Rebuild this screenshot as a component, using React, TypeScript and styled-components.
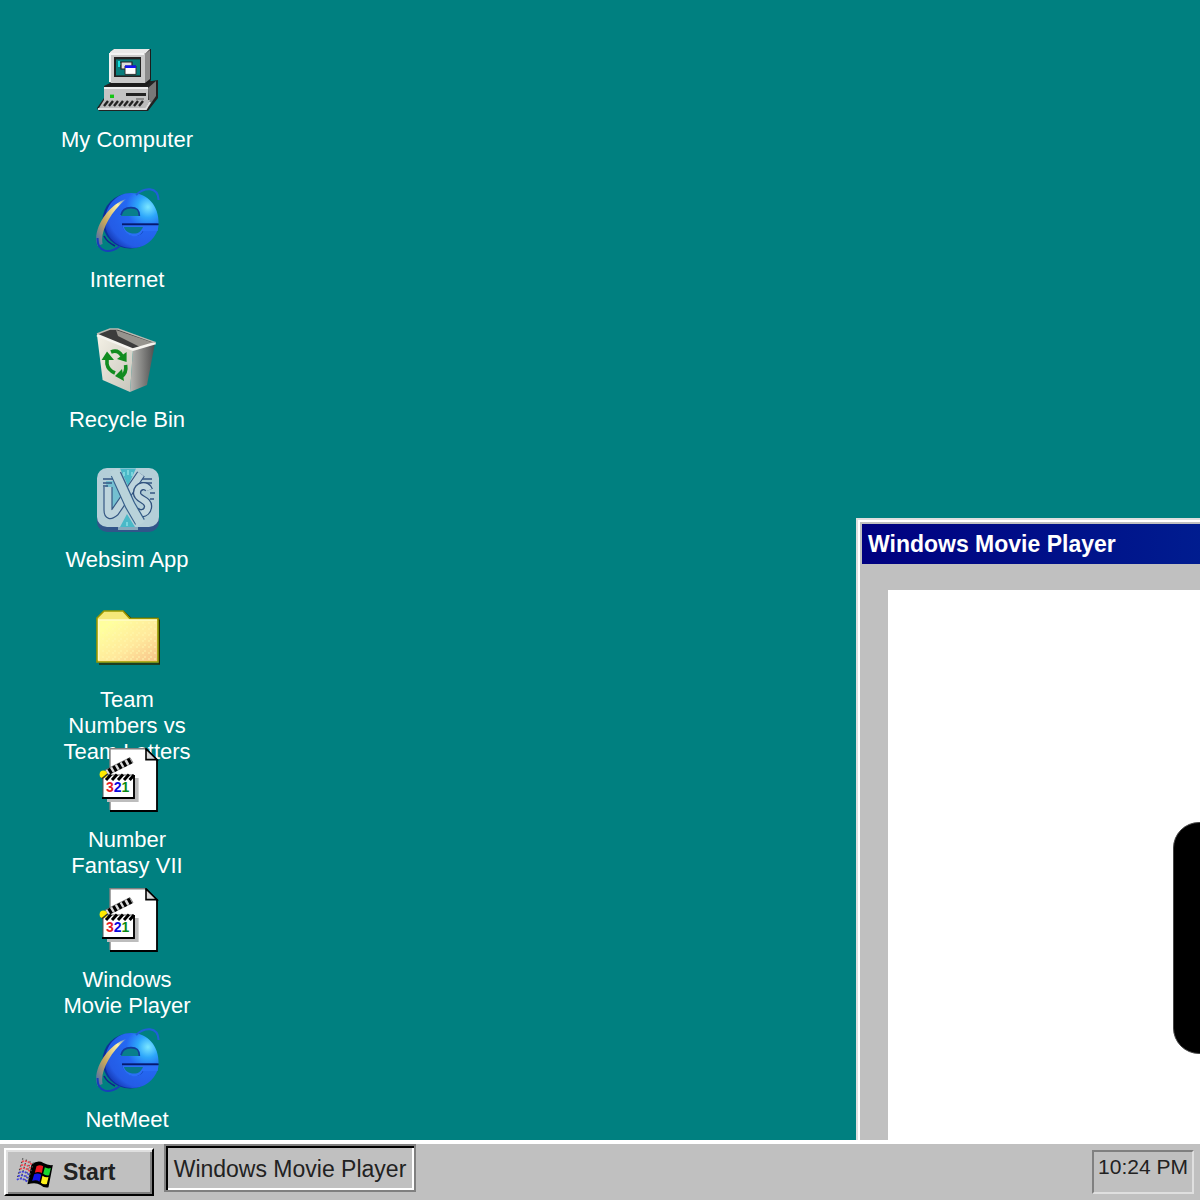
import { useState, useEffect, ReactElement } from 'react';
import styled, { createGlobalStyle } from 'styled-components';

interface DesktopItem {
    id: string;
    label: string;
    icon: () => ReactElement;
}

const GlobalStyle = createGlobalStyle`
    * {
        box-sizing: border-box;
    }

    body {
        margin: 0;
        background: #008080;
        font-family: 'Liberation Sans', Arial, sans-serif;
        font-size: 22px;
    }

    button {
        font: inherit;
        color: inherit;
        cursor: default;
    }
`;

// Styled Components
const Screen = styled.div`
    display: flex;
    flex-direction: column;
    height: 100vh;
    overflow: hidden;
`;

const Desktop = styled.main`
    position: relative;
    flex: 1;
    min-height: 0;
    overflow: hidden;
    background: #008080;
`;

const IconList = styled.ul`
    display: flex;
    flex-direction: column;
    margin: 0;
    padding: 48px 0 0 60px;
    list-style: none;
`;

const IconCell = styled.li`
    width: 136px;
    height: 140px;
`;

const IconButton = styled.button`
    display: flex;
    flex-direction: column;
    align-items: center;
    gap: 15px;
    width: 100%;
    padding: 0;
    border: none;
    background: none;
    color: white;
    line-height: 26px;
    text-align: center;
`;

const IconLabel = styled.span`
    padding-right: 2px;
`;

const IconArt = styled.svg`
    display: block;
    flex: none;
    width: 64px;
    height: 64px;
`;

const AppWindow = styled.section<{ $x: number; $y: number }>`
    position: absolute;
    left: ${props => props.$x}px;
    top: ${props => props.$y}px;
    padding: 2px;
    border: 2px solid;
    border-color: #dfdfdf #000 #000 #dfdfdf;
    background: #c0c0c0;
    box-shadow: inset 2px 2px #fff, inset -2px -2px #808080;
`;

const WindowInner = styled.div`
    padding: 2px;
`;

const TitleBar = styled.header`
    display: flex;
    align-items: center;
    height: 40px;
    padding: 0 6px;
    background: linear-gradient(90deg, #000080, #0050ac);
`;

const WindowTitle = styled.h1`
    margin: 0;
    color: white;
    font-size: 23px;
    font-weight: bold;
    line-height: 26px;
`;

const WindowBody = styled.div`
    padding: 26px;
`;

const MovieScreen = styled.div`
    display: flex;
    align-items: center;
    justify-content: center;
    width: 900px;
    height: 696px;
    background: white;
`;

const PlayButton = styled.button`
    display: flex;
    align-items: center;
    justify-content: center;
    width: 330px;
    height: 232px;
    border: 1px solid #444;
    border-radius: 26px;
    background: black;
`;

const Taskbar = styled.footer`
    display: flex;
    align-items: flex-start;
    gap: 10px;
    height: 60px;
    flex: none;
    padding: 0 6px 0 4px;
    border-top: 4px solid white;
    background: #c0c0c0;
    color: #222;
    line-height: 26px;
`;

const StartButton = styled.button`
    display: flex;
    align-items: center;
    gap: 10px;
    width: 150px;
    height: 48px;
    margin-top: 4px;
    padding: 0 10px;
    border: 2px solid;
    border-color: #fff #000 #000 #fff;
    background: #c0c0c0;
    box-shadow: inset 2px 2px #dfdfdf, inset -2px -2px #808080;
    font-size: 23px;
    font-weight: bold;
`;

const StartLogo = styled.svg`
    display: block;
    width: 37px;
    height: 31px;
`;

const TaskButton = styled.button`
    width: 252px;
    height: 48px;
    padding: 2px 6px 0;
    border: 2px solid #808080;
    background: #c0c0c0;
    box-shadow: inset 2px 2px #000, inset -2px -2px #fff;
    font-size: 23px;
    white-space: nowrap;
`;

const Tray = styled.div`
    width: 102px;
    height: 44px;
    margin: 6px 0 0 auto;
    padding: 2px 0;
    border: 2px solid;
    border-color: #808080 #dfdfdf #dfdfdf #808080;
    font-size: 21px;
    text-align: center;
    white-space: nowrap;
`;

// Icons, drawn on a 32x32 grid
const ComputerIcon = () => (
    <IconArt viewBox="0 0 32 32" aria-hidden="true">
        <path d="M4 19 9 16.500H28L31 16V25L26 31.500H1.500L.5 30 4 25Z" fill="#222" />
        <path d="M26 20 30 16.500V24L26.500 29Z" fill="#777" />
        <path d="M7 2 9 .5H27.500V16L25 19H7Z" fill="#1c1c1c" />
        <path d="M24.500 3 27 1V15.500L24.500 17.500Z" fill="#8c8c8c" />
        <path d="M7 2 9 .5H27L24.500 3H7Z" fill="#e8e8e8" />
        <path d="M6.500 2.500H24.500V17.500H7.500L6.500 16.500Z" fill="#c9c9c9" />
        <path d="M7 17V3H24" fill="none" stroke="#f2f2f2" />
        <path d="M9 4.500H22.500V14.500H9Z" fill="#222" />
        <path d="M10 5.700H22V13.700H10Z" fill="#087d7c" />
        <path d="M11 6.500h1v1h1v1h-1v1h-1z" fill="#19dede" />
        <path d="M12.500 7H18V10.500H12.500Z" fill="#ddd" stroke="#222" strokeWidth=".6" />
        <path d="M14.500 9H20V13.200H14.500Z" fill="white" stroke="#333" strokeWidth=".5" />
        <path d="M14.500 8.700H20V10H14.500Z" fill="#1414ef" />
        <path d="M4 19.500H26V26H4Z" fill="#c4c4c4" />
        <path d="M4 20H26" stroke="#eee" />
        <path d="M7 23.300H9V25H7Z" fill="#16c516" />
        <path d="M15 22.500H25V24H15Z" fill="#222" />
        <path d="M20 25.500H24" stroke="#777" strokeWidth=".7" />
        <path d="M4 26H27L25 30H1.500Z" fill="#bbb" />
        <path d="M1 30.500H25L27 27" fill="none" stroke="#dedede" />
        <path d="M4 29 6 26.500M6.500 29 8.500 26.500M9 29 11 26.500M11.500 29 13.500 26.500M14 29 16 26.500M16.500 29 18.500 26.500M19 29 21 26.500M21.500 29 23.500 26.500" stroke="#222" strokeWidth="1.200" />
    </IconArt>
);

const ExplorerIcon = () => (
    <IconArt viewBox="0 0 32 32" aria-hidden="true">
        <defs>
            <radialGradient id="globe" gradientUnits="userSpaceOnUse" cx="26" cy="9.500" r="26">
                <stop offset="0" stopColor="#7be6ff" />
                <stop offset=".2" stopColor="#2ea8fb" />
                <stop offset=".42" stopColor="#2468f2" />
                <stop offset=".8" stopColor="#245ce6" />
                <stop offset="1" stopColor="#1030a8" />
            </radialGradient>
            <linearGradient id="ring" x1="1" y1="0" x2="0" y2="1">
                <stop offset="0" stopColor="#3a78e0" />
                <stop offset=".2" stopColor="#fff0a1" />
                <stop offset=".6" stopColor="#c6a55a" />
                <stop offset="1" stopColor="#4168b4" />
            </linearGradient>
        </defs>
        <circle cx="17" cy="16.500" r="13.800" fill="#0c2f9c" />
        <path d="M17.500 2.500C26 2.500 31.500 9 31.300 17.700H13C13 21 16 24 19.500 24 22 24 23.500 22.500 24 20.500H31C29 26.500 24 30 18 30 10 30 4.500 24 4.500 17 4.500 9 10 2.500 17.500 2.500Z" fill="url(#globe)" />
        <path d="M12.500 14C13 11 15 9.800 17.500 9.800S22 11.500 21.700 14Z" fill="#087f8c" />
        <path d="M12.500 13.500C13 11 15 9.800 17.500 9.800 20.500 9.800 21.700 11 21.700 14" fill="none" stroke="#123b9c" strokeWidth=".8" />
        <path d="M13 18.500H31.300L30.800 21.500H23.500C22 24 20 24.500 18 24 15 23 13.500 21 13 18.500Z" fill="#2a6ff7" />
        <path d="M14 19.500H23.500C22.500 22 20.500 23.200 18 22.700 15.500 22.200 14.300 21 14 19.500Z" fill="#07778c" />
        <path d="M13 18.200H31.300" stroke="#06196e" strokeWidth=".9" />
        <path d="M20 3.500C24-.5 31-1 31.300 6" fill="none" stroke="#1f60d8" strokeWidth="1" />
        <path d="M15 5.500C6.500 8-2.500 21 .8 29L3.300 28C2 22 6.500 13 15 5.500Z" fill="url(#ring)" />
        <path d="M.8 25C.5 32.500 7 33 12 29" fill="none" stroke="#173fba" strokeWidth="1" />
        <path d="M4 24C5 26 7.500 28 9.500 29" stroke="#10218c" strokeWidth=".8" fill="none" />
    </IconArt>
);

const RecycleIcon = () => (
    <IconArt viewBox="0 0 32 32" aria-hidden="true">
        <defs>
            <linearGradient id="binFront" x1="0" y1="0" x2="1" y2="1">
                <stop offset="0" stopColor="#f4f1e6" />
                <stop offset="1" stopColor="#c8c6bc" />
            </linearGradient>
            <linearGradient id="binSide">
                <stop offset="0" stopColor="#b8b8b4" />
                <stop offset="1" stopColor="#4d4d4d" />
            </linearGradient>
        </defs>
        <path d="M.5 3 7 .5H11L29.800 7.500 18.500 11.500Z" fill="#3c3c3c" />
        <path d="M10 1 29 7.500 22 9.500 11 4Z" fill="#96948e" />
        <path d="M18.500 10.500 29.500 7.500 25.500 28.500 17 32Z" fill="url(#binSide)" />
        <path d="M.5 3.500 18.500 10.500 17 32 3.300 26Z" fill="url(#binFront)" />
        <path d="M.5 3.500 18.500 10.800 29.800 7.500" fill="none" stroke="#f5f4ef" strokeWidth="1.300" />
        <path d="M.5 3 7 .5H11L29.800 7.300" fill="none" stroke="#bcbab2" strokeWidth=".7" />
        <path d="M5.500 15V18Q6 21 9.500 22.500M7.500 12Q11 10.500 13 14M14.800 18.500Q15.500 22.500 12.500 24.500" fill="none" stroke="#118c20" strokeWidth="1.800" />
        <path d="M2.800 16 5.500 11.800 9 16ZM10.500 15.500 15.300 12 15.300 17ZM13 20.500 9.500 24 14 26.500Z" fill="#118c20" />
    </IconArt>
);

const WebsimIcon = () => (
    <IconArt viewBox="0 0 32 32" aria-hidden="true">
        <rect x=".5" y="1" width="31" height="31" rx="5" fill="#31558a" />
        <path d="M11 26H21V31H11Z" fill="#86a9bd" />
        <rect x=".5" y="0" width="31" height="29.500" rx="5" fill="#b4cfd8" />
        <path d="M12 .3H20L16 9ZM12 29.500 15.500 23 19.500 29.500Z" fill="#4ab9c8" />
        <path d="M5 6.500H10L14.500 17 9.500 23 5.500 20Z" fill="#74bfd0" />
        <path d="M3.500 5.500H9.500M3.500 7.500H8M3.500 9H6M22 5.500H28M24 7.500H28M27 12.500H29.500M27 15.500H29" stroke="#355783" strokeWidth=".7" />
        <path d="M6 9.500V21Q6 25 9.500 22L22.500 3" fill="none" stroke="#355783" strokeWidth="4.600" />
        <path d="M6 9.500V21Q6 25 9.500 22L22.500 3" fill="none" stroke="#bdd4dc" strokeWidth="3.400" />
        <path d="M26.500 11C25.500 8 20.500 8.500 20.500 12.500 20.500 16 26.500 15.500 26 19.500 25.500 23.500 20.500 23.500 19.500 20.500" fill="none" stroke="#30527e" strokeWidth="4.200" />
        <path d="M26.500 11C25.500 8 20.500 8.500 20.500 12.500 20.500 16 26.500 15.500 26 19.500 25.500 23.500 20.500 23.500 19.500 20.500" fill="none" stroke="#c2d8df" strokeWidth="2.900" />
        <path d="M10 3 17 18.500 22 27" fill="none" stroke="#37608b" strokeWidth="5.600" />
        <path d="M9 1 17 18.500 22.500 28" fill="none" stroke="#b9d3da" strokeWidth="4.400" />
        <path d="M14 2V4M16 1V3.500M18 2V4M15.500 27V29" stroke="#8fe2e6" strokeWidth=".7" />
    </IconArt>
);

const FolderIcon = () => (
    <IconArt viewBox="0 0 32 32" aria-hidden="true">
        <defs>
            <linearGradient id="folder" x1="0" y1="0" x2="1" y2="1">
                <stop offset=".15" stopColor="#ffff9e" />
                <stop offset=".6" stopColor="#ffe89c" />
                <stop offset="1" stopColor="#f8c489" />
            </linearGradient>
            <pattern id="grain" width="3" height="3" patternUnits="userSpaceOnUse">
                <path d="M0 0h1v1H0zM2 1h1v1H2z" fill="#fff9b0" opacity=".45" />
            </pattern>
        </defs>
        <path d="M13.500 1.500 17.500 5.300H31L31.700 6.500V28H1.500" fill="none" stroke="#292900" strokeWidth=".8" />
        <path d="M.5 5 4 1.500H13.500L17 5.300H31V27H.5Z" fill="#f5e879" stroke="#999600" strokeWidth=".8" />
        <path d="M1.200 6H30.500V26.500H1.200Z" fill="url(#folder)" />
        <path d="M3 7H30V26H3Z" fill="url(#grain)" />
        <path d="M1.300 26V6H30.500" fill="none" stroke="#fffbc8" strokeWidth=".7" />
    </IconArt>
);

const MovieIcon = () => (
    <IconArt viewBox="0 0 32 32" aria-hidden="true">
        <path d="M7 .5H25L30.500 6V31.500H7Z" fill="white" />
        <path d="M7 31V.4H25" fill="none" stroke="#808080" strokeWidth=".7" />
        <path d="M25 .5 30.500 6V31.500H7" fill="none" stroke="black" strokeWidth=".9" />
        <path d="M25 .5V5.800H30.500Z" fill="#d7d7d7" stroke="black" strokeWidth=".8" />
        <path d="M5.500 15H21.300V27H5.500Z" fill="#bdbdbd" />
        <path d="M3.500 13.500H19V25H3.500Z" fill="white" stroke="#555" strokeWidth=".5" />
        <path d="M3 25H19V13.500" fill="none" stroke="black" strokeWidth=".9" />
        <path d="M5 16 7.500 13.300M8 16 10.500 13.300M11 16 13.500 13.300M14 16 16.500 13.300M16.800 16 19 13.500" stroke="black" strokeWidth="1.500" />
        <path d="M4.500 11 17 4.800 18.500 7.300 6 13.500Z" fill="#ddd" stroke="#444" strokeWidth=".3" />
        <path d="M6.300 10.200 7.800 12.800M8.700 9 10.200 11.600M11.100 7.800 12.600 10.400M13.500 6.600 15 9.200M16 5.300 17.500 8" stroke="black" strokeWidth="1.500" />
        <circle cx="3.700" cy="13.200" r="1.900" fill="#ffed00" />
        <path d="M3 15.300 5.800 13" stroke="#333" strokeWidth=".7" />
        <text x="5" y="22.200" fontFamily="Liberation Sans, sans-serif" fontSize="7" fontWeight="bold">
            <tspan fill="#e51b24">3</tspan>
            <tspan fill="#0808df">2</tspan>
            <tspan fill="#088a13">1</tspan>
        </text>
    </IconArt>
);

const WindowsLogo = () => (
    <StartLogo viewBox="0 0 110 93" aria-hidden="true">
        <path d="M46 22Q66 8 82 18 96 26 110 24L97 91Q84 94 73 84 58 74 34 82Z" fill="black" />
        <path d="M61 28Q71 21 81 28L77 48Q66 42 56 47Z" fill="#f01820" />
        <path d="M86 31Q95 36 104 33L99 55Q88 57 81 50Z" fill="#18d72f" />
        <path d="M54 52Q65 47 75 53L70 74Q60 67 48 72Z" fill="#1414e8" />
        <path d="M79 56Q88 62 97 60L92 81Q82 84 74 77Z" fill="#fff21a" />
        <path d="M20 4 4 60M31 8 14 66M42 13 25 72M52 17 34 78" stroke="#444" strokeWidth="4" strokeDasharray="4 7" />
        <path d="M17 14Q33 8 49 25M14 25Q30 19 46 36M11 36Q28 29 43 45" fill="none" stroke="#ee4550" strokeWidth="5" strokeDasharray="6 3" />
        <path d="M8 47Q24 39 40 55M5 58Q22 50 38 66M2 68Q18 60 35 76" fill="none" stroke="#4040df" strokeWidth="5" strokeDasharray="6 3" />
    </StartLogo>
);

const desktopItems: DesktopItem[] = [
    { id: 'computer', label: 'My Computer', icon: ComputerIcon },
    { id: 'internet', label: 'Internet', icon: ExplorerIcon },
    { id: 'recycle', label: 'Recycle Bin', icon: RecycleIcon },
    { id: 'websim', label: 'Websim App', icon: WebsimIcon },
    { id: 'team', label: 'Team Numbers vs Team Letters', icon: FolderIcon },
    { id: 'fantasy', label: 'Number Fantasy VII', icon: MovieIcon },
    { id: 'player', label: 'Windows Movie Player', icon: MovieIcon },
    { id: 'netmeet', label: 'NetMeet', icon: ExplorerIcon },
];

export default function App() {
    const [open, setOpen] = useState(true);

    useEffect(() => {
        document.title = 'Desktop';
    }, []);

    return (
        <Screen>
            <GlobalStyle />
            <Desktop>
                <IconList>
                    {desktopItems.map(({ id, label, icon: Icon }) => (
                        <IconCell key={id}>
                            <IconButton
                                type="button"
                                onDoubleClick={() => id === 'player' && setOpen(true)}
                            >
                                <Icon />
                                <IconLabel>{label}</IconLabel>
                            </IconButton>
                        </IconCell>
                    ))}
                </IconList>

                {open && (
                    <AppWindow $x={856} $y={518} aria-labelledby="player-title">
                        <WindowInner>
                            <TitleBar>
                                <WindowTitle id="player-title">Windows Movie Player</WindowTitle>
                            </TitleBar>
                            <WindowBody>
                                <MovieScreen>
                                    <PlayButton type="button" aria-label="Play" />
                                </MovieScreen>
                            </WindowBody>
                        </WindowInner>
                    </AppWindow>
                )}
            </Desktop>

            <Taskbar>
                <StartButton type="button">
                    <WindowsLogo />
                    Start
                </StartButton>
                <TaskButton type="button" aria-pressed={open} onClick={() => setOpen(!open)}>
                    Windows Movie Player
                </TaskButton>
                <Tray>10:24 PM</Tray>
            </Taskbar>
        </Screen>
    );
}
